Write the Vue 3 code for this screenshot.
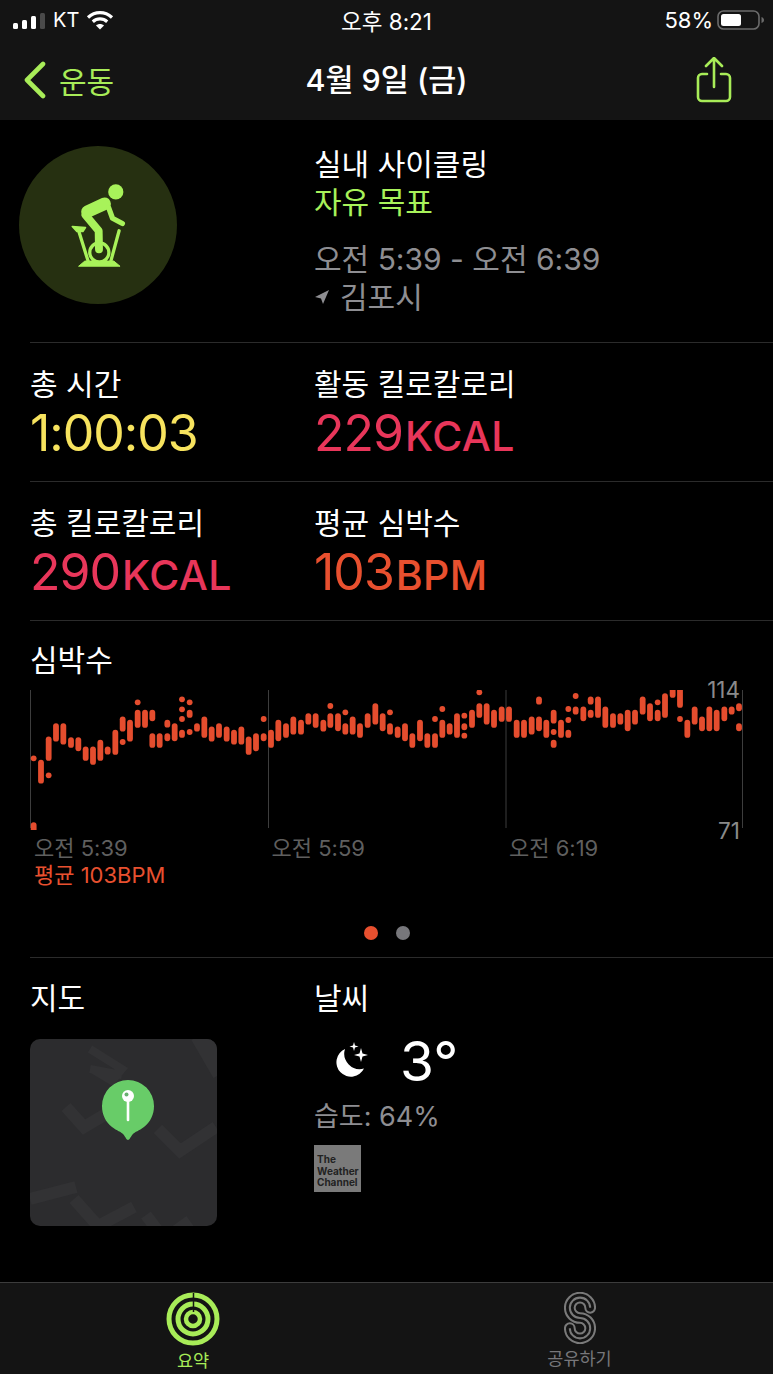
<template>
  <div class="app">
    <header class="top">
      <div class="status">
        <div class="status-left">
          <svg class="signal" width="34" height="16" viewBox="0 0 34 16">
            <rect x="0" y="10" width="5" height="6" rx="1.5" fill="#fff" />
            <rect x="9" y="7" width="5" height="9" rx="1.5" fill="#fff" />
            <rect x="18" y="3" width="5" height="13" rx="1.5" fill="#fff" />
            <rect x="27" y="0" width="5" height="16" rx="1.5" fill="#4a4a4a" />
          </svg>
          <span class="carrier">KT</span>
          <svg width="28" height="20" viewBox="0 0 28 20" fill="none" stroke="#fff" stroke-width="3.2">
            <path d="M2 7.5C9 1 19 1 26 7.5" />
            <path d="M6.8 11.8C11 8 17 8 21.2 11.8" />
            <path d="M14 19.5l-4-4c2.2-2 5.8-2 8 0z" fill="#fff" stroke="none" />
          </svg>
        </div>
        <div class="clock">오후 8:21</div>
        <div class="status-right">
          <span>58%</span>
          <svg width="48" height="22" viewBox="0 0 48 22">
            <rect x="1" y="2" width="41" height="18" rx="5.5" fill="none" stroke="#6b6b6b" stroke-width="1.6" />
            <rect x="4" y="5" width="20" height="12" rx="2.5" fill="#fff" />
            <path d="M44.5 8c1.6.5 2.5 1.6 2.5 3s-.9 2.500-2.500 3z" fill="#6b6b6b" />
          </svg>
        </div>
      </div>
      <nav class="nav">
        <div class="back">
          <svg width="24" height="38" viewBox="0 0 24 38" fill="none" stroke="#a8ec58" stroke-width="4.6" stroke-linecap="round" stroke-linejoin="round">
            <path d="M20 3L4 19l16 16" />
          </svg>
          <span>운동</span>
        </div>
        <div class="nav-title">4월 9일 (금)</div>
        <svg class="share" width="38" height="46" viewBox="0 0 38 46" fill="none" stroke="#a8ec58" stroke-width="2.6" stroke-linecap="round" stroke-linejoin="round">
          <path d="M12 17H7a4 4 0 0 0-4 4v19a4 4 0 0 0 4 4h24a4 4 0 0 0 4-4V21a4 4 0 0 0-4-4h-5" />
          <path d="M19 30V2M11 9l8-8 8 8" />
        </svg>
      </nav>
    </header>

    <main class="content">
      <section class="workout">
        <div class="badge">
          <svg width="58" height="87" viewBox="198 148 176 264" fill="none" stroke="#a8f25a" stroke-linecap="round" stroke-linejoin="round">
            <circle cx="340" cy="178" r="23" fill="#a8f25a" stroke="none" />
            <path d="M306 214L254 238" stroke-width="38" />
            <path d="M248 248L288 296L289 352" stroke-width="24" />
            <path d="M318 225L330 258L360 274" stroke-width="16" />
            <path d="M208 283L248 286L240 298L222 298Z" fill="#a8f25a" stroke-width="5" />
            <path d="M228 298L256 388M350 296L325 388" stroke-width="10" />
            <circle cx="290" cy="362" r="29" stroke-width="10" />
            <path d="M228 403L246 388H334L352 403Z" fill="#a8f25a" stroke-width="3" />
          </svg>
        </div>
        <div class="workout-text">
          <div class="line white">실내 사이클링</div>
          <div class="line green">자유 목표</div>
          <div class="line grey times">오전 5:39 - 오전 6:39</div>
          <div class="line grey place">
            <svg width="16" height="16" viewBox="0 0 16 16"><path d="M15 1L1 8l6 1.500L9 15z" fill="#8e8e92" /></svg>
            <span>김포시</span>
          </div>
        </div>
      </section>

      <section v-for="(row, i) in stats" :key="i" class="stat-row">
        <div v-for="cell in row" :key="cell.label" class="stat">
          <div class="stat-label">{{ cell.label }}</div>
          <div class="stat-value" :class="cell.color">{{ cell.value }}<small v-if="cell.unit">{{ cell.unit }}</small></div>
        </div>
      </section>

      <section class="heart">
        <div class="stat-label">심박수</div>
        <div class="chart">
          <svg class="plot" width="713" height="140" viewBox="30 690 713 140">
            <line v-for="x in gridX" :key="x" :x1="x" :x2="x" y1="690" y2="828" stroke="#3d3d3d" stroke-width="1" />
            <line
              v-for="(s, i) in segments"
              :key="i"
              :x1="s.x" :x2="s.x" :y1="s.y1" :y2="s.y2"
              stroke="#e54d2e" stroke-width="5.800" stroke-linecap="round"
            />
          </svg>
          <span class="max">114</span>
          <span class="min">71</span>
        </div>
        <div class="axis">
          <span>오전 5:39</span>
          <span>오전 5:59</span>
          <span>오전 6:19</span>
        </div>
        <div class="avg">평균 103BPM</div>
        <div class="dots"><i class="on"></i><i></i></div>
      </section>

      <section class="extra">
        <div>
          <div class="stat-label">지도</div>
          <div class="map">
            <svg width="187" height="187" viewBox="0 0 187 187" fill="none" stroke="#323234" stroke-width="12">
              <path d="M60 10L92 30L82 42L62 30M60 30L92 36" stroke-width="8" />
              <path d="M170 -4L192 34" stroke-width="20" />
              <path d="M36 68L54 88L88 68" />
              <path d="M128 90L150 112L186 88" />
              <path d="M0 160L46 148" />
              <path d="M44 160L68 187L104 168" />
              <path d="M116 176L128 192M146 192L160 182" />
            </svg>
            <svg class="pin" width="54" height="62" viewBox="0 0 54 62">
              <path d="M27 61c-1.500 0-2.500-3-4.500-5.500C20 52.500 16 52 11 48 4.500 43 1 35.500 1 27a26 26 0 0 1 52 0c0 8.500-3.500 16-10 21-5 4-9 4.500-11.500 7.500C29.500 58 28.500 61 27 61z" fill="#68cc68" />
              <line x1="27" y1="18" x2="27" y2="41" stroke="#fff" stroke-width="2.600" stroke-linecap="round" />
              <circle cx="27" cy="17" r="6" fill="#fff" />
              <circle cx="25.500" cy="15.500" r="2" fill="#68b070" />
            </svg>
          </div>
        </div>
        <div>
          <div class="stat-label">날씨</div>
          <div class="weather">
            <svg width="38" height="38" viewBox="0 0 38 38" fill="#fff">
              <path d="M13 7a14.500 14.500 0 1 0 19 19.500A15.500 15.500 0 0 1 13 7z" />
              <path d="M22 0l1 3.500 3.500 1-3.500 1L22 9l-1-3.500-3.500-1 3.500-1z" />
              <path d="M29 6l1.500 5.500 5.500 1.500-5.500 1.500L29 20l-1.500-5.500L22 13l5.500-1.500z" />
            </svg>
            <span class="temp">3°</span>
          </div>
          <div class="humidity">습도: 64%</div>
          <div class="twc">The<br />Weather<br />Channel</div>
        </div>
      </section>
    </main>

    <footer class="tabs">
      <div class="tab active">
        <svg width="54" height="54" viewBox="0 0 54 54" fill="none" stroke="#a8ec58">
          <circle cx="27" cy="27" r="24" stroke-width="5" />
          <circle cx="27" cy="27" r="15" stroke-width="5" />
          <circle cx="27" cy="27" r="7" stroke-width="4.500" />
          <path d="M27.500 1v19" stroke="#141414" stroke-width="1.500" />
        </svg>
        <span>요약</span>
      </div>
      <div class="tab">
        <svg width="32" height="52" viewBox="-16.500 -26.500 33 53" fill="none" stroke="#7a7a7a" stroke-width="2.100">
          <path d="M15.500 -10.500A15.500 15.500 0 1 0 0 5A5.500 5.500 0 1 1 -5.500 10.500A5 5 0 0 0 -15.500 10.500A15.500 15.500 0 1 0 0 -5A5.500 5.500 0 1 1 5.500 -10.500A5 5 0 0 0 15.500 -10.500Z" />
          <path d="M10.500 -10.500A10.500 10.500 0 1 0 0 0A10.500 10.500 0 1 1 -10.500 10.500" />
        </svg>
        <span>공유하기</span>
      </div>
    </footer>
  </div>
</template>

<script setup>
const stats = [
  [
    { label: '총 시간', value: '1:00:03', color: 'yellow' },
    { label: '활동 킬로칼로리', value: '229', unit: 'KCAL', color: 'pink' }
  ],
  [
    { label: '총 킬로칼로리', value: '290', unit: 'KCAL', color: 'pink' },
    { label: '평균 심박수', value: '103', unit: 'BPM', color: 'orange' }
  ]
]

const gridX = [30.5, 268.5, 506, 742.5]

// 3배 확대 좌표로 읽은 값: [x, y1, y2, y1, y2, ...]  y1 == y2 면 점
const left = [
  [101, 265, 265, 457, 490], [123, 270, 340], [146, 200, 272, 316, 316], [168, 160, 214],
  [190, 160, 223], [213, 202, 233], [235, 202, 243], [257, 230, 272], [279, 230, 284],
  [301, 210, 272], [323, 230, 253], [346, 180, 254], [368, 140, 184, 216, 216], [390, 150, 214],
  [413, 97, 97, 120, 173], [435, 120, 173], [457, 120, 153, 190, 233], [479, 190, 233],
  [502, 150, 172, 190, 213], [524, 160, 213], [546, 88, 88, 118, 118, 147, 147, 180, 203],
  [569, 97, 97, 120, 143, 186, 186], [591, 160, 184], [613, 140, 203], [635, 170, 214],
  [657, 160, 203], [680, 170, 214], [702, 180, 223], [724, 170, 223], [746, 200, 254],
  [768, 190, 243], [791, 147, 147, 190, 213], [813, 180, 233], [835, 150, 213], [858, 160, 203],
  [880, 140, 193], [903, 150, 193], [925, 130, 163], [947, 130, 173], [970, 150, 184],
  [991, 108, 108, 130, 173], [1014, 130, 183], [1036, 127, 127, 160, 193], [1058, 140, 193],
  [1080, 160, 203], [1103, 130, 173], [1126, 100, 163], [1148, 130, 183]
]
const right = [
  [15, 127, 127, 160, 193], [38, 170, 203], [60, 160, 213], [82, 190, 233], [105, 150, 213],
  [127, 190, 233], [150, 147, 147, 190, 233], [172, 117, 117, 150, 203], [194, 160, 193],
  [216, 130, 203], [238, 137, 137, 160, 180, 197, 197], [261, 120, 173], [283, 67, 67, 100, 143],
  [305, 100, 163], [327, 120, 173], [350, 110, 155], [372, 110, 155], [395, 150, 203],
  [417, 150, 203], [440, 140, 193], [462, 80, 103, 140, 183], [484, 150, 203],
  [506, 120, 160, 186, 186, 210, 233], [528, 150, 203], [550, 117, 117, 150, 150, 180, 203],
  [572, 78, 78, 110, 133], [595, 110, 153], [617, 80, 103, 120, 143], [639, 80, 143],
  [661, 110, 173], [684, 130, 173], [706, 130, 163], [728, 120, 183], [750, 120, 163],
  [773, 80, 133], [795, 100, 153], [818, 97, 97, 120, 153], [840, 70, 143], [863, 50, 83],
  [885, 50, 113, 147, 147], [907, 150, 203], [929, 110, 163], [951, 140, 183], [973, 110, 183],
  [995, 120, 183], [1018, 110, 153], [1040, 110, 133], [1062, 100, 123, 160, 183]
]

function toSegments(cols, offset) {
  const out = []
  for (const col of cols) {
    const x = col[0] / 3 + offset
    for (let i = 1; i < col.length; i += 2) {
      const dot = col[i] === col[i + 1]
      out.push({
        x,
        y1: col[i] / 3 + 670 + (dot ? 0 : 2.7),
        y2: col[i + 1] / 3 + 670 - (dot ? 0 : 2.7)
      })
    }
  }
  return out
}

const segments = [...toSegments(left, 0), ...toSegments(right, 385)]
</script>

<style scoped>
.app {
  width: 773px;
  height: 1374px;
  display: flex;
  flex-direction: column;
  background: #000;
  color: #fff;
  font-family: Inter, "Noto Sans CJK KR", sans-serif;
  overflow: hidden;
}

.top {
  height: 120px;
  flex: none;
  background: #141414;
}

.status {
  height: 40px;
  display: grid;
  grid-template-columns: 1fr auto 1fr;
  align-items: center;
  padding: 0 8px 0 13px;
  font-size: 22px;
}

.status-left {
  display: flex;
  align-items: center;
  gap: 6px;
}

.signal {
  margin-top: 2px;
}

.carrier {
  margin-right: 1px;
  font-size: 20px;
}

.clock {
  margin-left: -5px;
  font-size: 22.5px;
}

.status-right {
  display: flex;
  align-items: center;
  justify-content: flex-end;
  gap: 4px;
}

.nav {
  height: 80px;
  display: flex;
  align-items: center;
  justify-content: space-between;
  position: relative;
  padding: 0 40px 4px 23px;
}

.back {
  display: flex;
  align-items: center;
  gap: 12px;
  color: #a8ec58;
  font-size: 30px;
}

.nav-title {
  position: absolute;
  left: 0;
  right: 0;
  padding-bottom: 4px;
  text-align: center;
  font-size: 30.500px;
  font-weight: 500;
}

.content {
  flex: 1;
}

.workout {
  height: 222px;
  display: grid;
  grid-template-columns: 295px 1fr;
  padding-left: 19px;
  align-items: start;
}

.badge {
  width: 158px;
  height: 158px;
  margin-top: 26px;
  border-radius: 50%;
  background: #263011;
  display: flex;
  align-items: center;
  justify-content: center;
}

.workout-text {
  padding-top: 25px;
}

.line {
  font-size: 30px;
  line-height: 38px;
}

.white {
  color: #fff;
}

.green {
  color: #a8f25a;
}

.grey {
  color: #8e8e92;
}

.times {
  margin-top: 19px;
}

.place {
  display: flex;
  align-items: center;
  gap: 10px;
}

.stat-row {
  height: 139px;
  margin-left: 30px;
  border-top: 1px solid #2b2b2b;
  box-sizing: border-box;
  display: grid;
  grid-template-columns: 284px 1fr;
  padding-top: 21px;
}

.stat-label {
  font-size: 30px;
  line-height: 40px;
}

.stat-value {
  font-size: 50px;
  line-height: 58px;
  letter-spacing: -1px;
}

.stat-value small {
  font-size: 41px;
  font-weight: 500;
  letter-spacing: 0.4px;
  margin-left: 2px;
}

.yellow {
  color: #f7e35e;
}

.pink {
  color: #e8365a;
}

.orange {
  color: #e8502f;
}

.heart {
  height: 338px;
  margin-left: 30px;
  border-top: 1px solid #2b2b2b;
  box-sizing: border-box;
  padding-top: 19px;
  border-bottom: 1px solid #2b2b2b;
}

.chart {
  position: relative;
  height: 140px;
  margin-top: 10px;
}

.plot {
  display: block;
}

.max,
.min {
  position: absolute;
  right: 33px;
  font-size: 22.500px;
  color: #8a8a8a;
}

.max {
  top: -14px;
}

.min {
  bottom: -14px;
}

.axis {
  display: grid;
  grid-template-columns: repeat(3, 237.5px);
  padding: 4px 0 0 4px;
  font-size: 22px;
  line-height: 28px;
  color: #5f5f5f;
}

.avg {
  padding-left: 4px;
  font-size: 22px;
  line-height: 26px;
  color: #e8502f;
}

.dots {
  display: flex;
  justify-content: center;
  gap: 18px;
  margin: 38px 0 0 -30px;
  padding-left: 1px;
}

.dots i {
  width: 14px;
  height: 14px;
  border-radius: 50%;
  background: #77777b;
}

.dots i.on {
  background: #e8502f;
}

.extra {
  height: 324px;
  padding: 20px 0 0 30px;
  display: grid;
  grid-template-columns: 284px 1fr;
  box-sizing: border-box;
}

.map {
  position: relative;
  width: 187px;
  height: 187px;
  margin-top: 21px;
  border-radius: 10px;
  background: #2c2c2e;
  overflow: hidden;
}

.map > svg:first-child {
  display: block;
}

.pin {
  position: absolute;
  left: 71px;
  top: 40px;
}

.weather {
  display: flex;
  align-items: center;
  gap: 30px;
  margin: 13px 0 0 18px;
  height: 60px;
}

.temp {
  font-size: 55px;
  line-height: 60px;
}

.humidity {
  font-size: 27px;
  line-height: 36px;
  margin-top: 8px;
  color: #8e8e92;
}

.twc {
  width: 47px;
  height: 47px;
  box-sizing: border-box;
  margin-top: 10px;
  padding: 9px 0 0 3px;
  background: #7a7a7a;
  color: #222;
  font-size: 10px;
  line-height: 11.500px;
  font-weight: 700;
}

.tabs {
  height: 92px;
  flex: none;
  display: grid;
  grid-template-columns: 386px 387px;
  background: #141414;
  border-top: 1px solid #3c3c3c;
  box-sizing: border-box;
}

.tab {
  display: flex;
  flex-direction: column;
  align-items: center;
  padding-top: 9px;
  color: #77777b;
  font-size: 17.500px;
}

.tab.active {
  color: #a8ec58;
}

.tab span {
  line-height: 24px;
  margin-top: 3px;
}
</style>

<style>
html,
body {
  background: #000;
}
</style>
